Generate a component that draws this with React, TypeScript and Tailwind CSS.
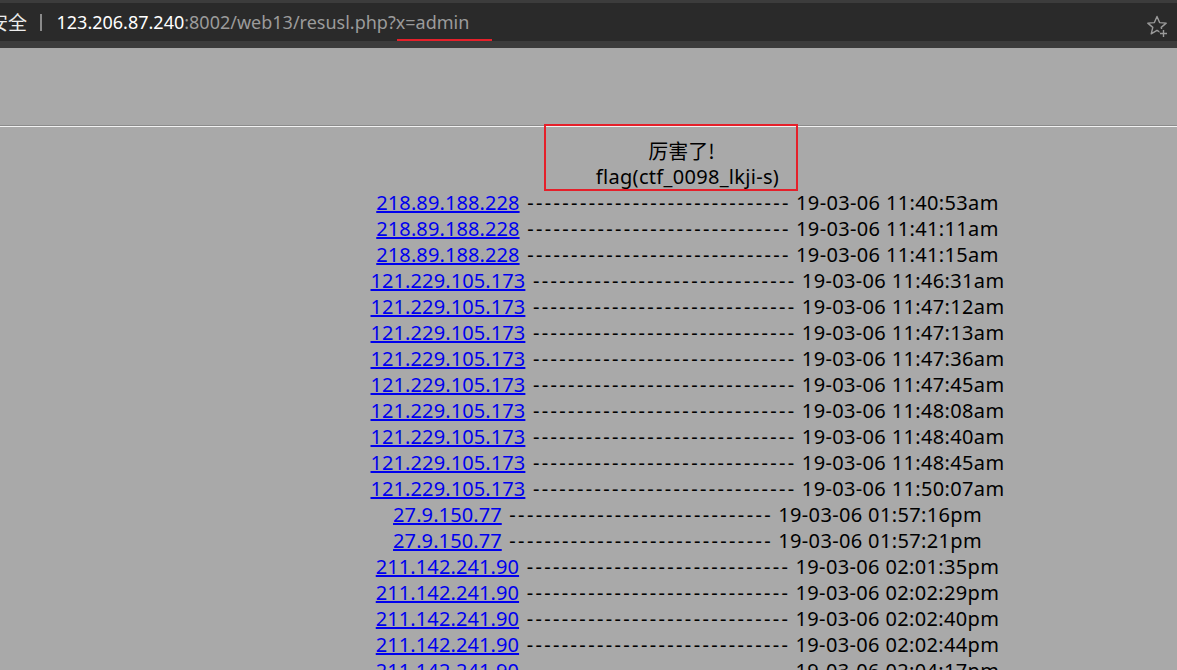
import React from 'react';

const rows = [
  { ip: '218.89.188.228', time: '19-03-06 11:40:53am' },
  { ip: '218.89.188.228', time: '19-03-06 11:41:11am' },
  { ip: '218.89.188.228', time: '19-03-06 11:41:15am' },
  { ip: '121.229.105.173', time: '19-03-06 11:46:31am' },
  { ip: '121.229.105.173', time: '19-03-06 11:47:12am' },
  { ip: '121.229.105.173', time: '19-03-06 11:47:13am' },
  { ip: '121.229.105.173', time: '19-03-06 11:47:36am' },
  { ip: '121.229.105.173', time: '19-03-06 11:47:45am' },
  { ip: '121.229.105.173', time: '19-03-06 11:48:08am' },
  { ip: '121.229.105.173', time: '19-03-06 11:48:40am' },
  { ip: '121.229.105.173', time: '19-03-06 11:48:45am' },
  { ip: '121.229.105.173', time: '19-03-06 11:50:07am' },
  { ip: '27.9.150.77', time: '19-03-06 01:57:16pm' },
  { ip: '27.9.150.77', time: '19-03-06 01:57:21pm' },
  { ip: '211.142.241.90', time: '19-03-06 02:01:35pm' },
  { ip: '211.142.241.90', time: '19-03-06 02:02:29pm' },
  { ip: '211.142.241.90', time: '19-03-06 02:02:40pm' },
  { ip: '211.142.241.90', time: '19-03-06 02:02:44pm' },
  { ip: '211.142.241.90', time: '19-03-06 02:04:17pm' },
];

const dashes = '------------------------------';

const App: React.FC = () => {
  return (
    <div className="relative w-[1177px] h-[670px] overflow-hidden bg-[#a9a9a9] font-['Noto_Sans','Noto_Sans_CJK_SC',sans-serif]">
      {/* Browser chrome */}
      <div className="h-[48px] bg-[#3c3c3c] pt-[3px] pb-[7px]">
        <div className="relative h-[38px] bg-[#2a2a2a] flex items-center text-[18px]">
          <span className="-ml-[11px] text-[#ececec] text-[19px] font-['Noto_Sans_CJK_SC',sans-serif]">安全</span>
          <span className="ml-[13px] w-[1.5px] h-[17px] bg-[#8a8a8a]" />
          <span className="ml-[15px] text-white">123.206.87.240</span>
          <span className="text-[#9b9b9b]">:8002/web13/resusl.php?x=admin</span>
          <div className="absolute left-[397px] top-[36px] w-[95px] h-[2px] bg-[#e5202a]" />
          <svg className="absolute left-[1145px] top-[11px]" width="26" height="26" viewBox="0 0 26 26" fill="none" strokeLinejoin="round">
            <path
              d="M12 2.5 L14.6 8.6 L21.2 9.1 L16.2 13.4 L17.8 19.8 L12 16.3 L6.2 19.8 L7.8 13.4 L2.8 9.1 L9.4 8.6 Z"
              stroke="#9a9a9a"
              strokeWidth="1.4"
            />
            <rect x="14.5" y="15" width="8" height="8" fill="#2a2a2a" />
            <path d="M18.5 16 V23 M15 19.5 H22" stroke="#9a9a9a" strokeWidth="1.4" />
          </svg>
        </div>
      </div>

      {/* Page */}
      <div className="w-[1375px]">
        <div className="h-[77px]" />
        <div className="border-t border-t-[#8c8c8c] border-b border-b-[#f2f2f2]" />
        <div className="pt-[11px] text-center text-[20px] leading-[26px] text-black">
          <div className="font-['Noto_Sans_CJK_SC',sans-serif] pr-[12px]">厉害了!</div>
          <div className="tracking-[0.3px]">flag(ctf_0098_lkji-s)</div>
          {rows.map((r, i) => (
            <div key={i} className="whitespace-pre">
              <a href="#" className="text-[#0000ee] underline tracking-[0.1px]">{r.ip}</a>
              <span className="tracking-[2.35px]"> {dashes}</span>
              <span> </span>
              <span className="tracking-[0.35px]">{r.time}</span>
            </div>
          ))}
        </div>
      </div>

      {/* red annotation box */}
      <div className="absolute left-[544px] top-[124px] w-[254px] h-[67px] border-2 border-[#e5202a]" />
    </div>
  );
};

export default App;
